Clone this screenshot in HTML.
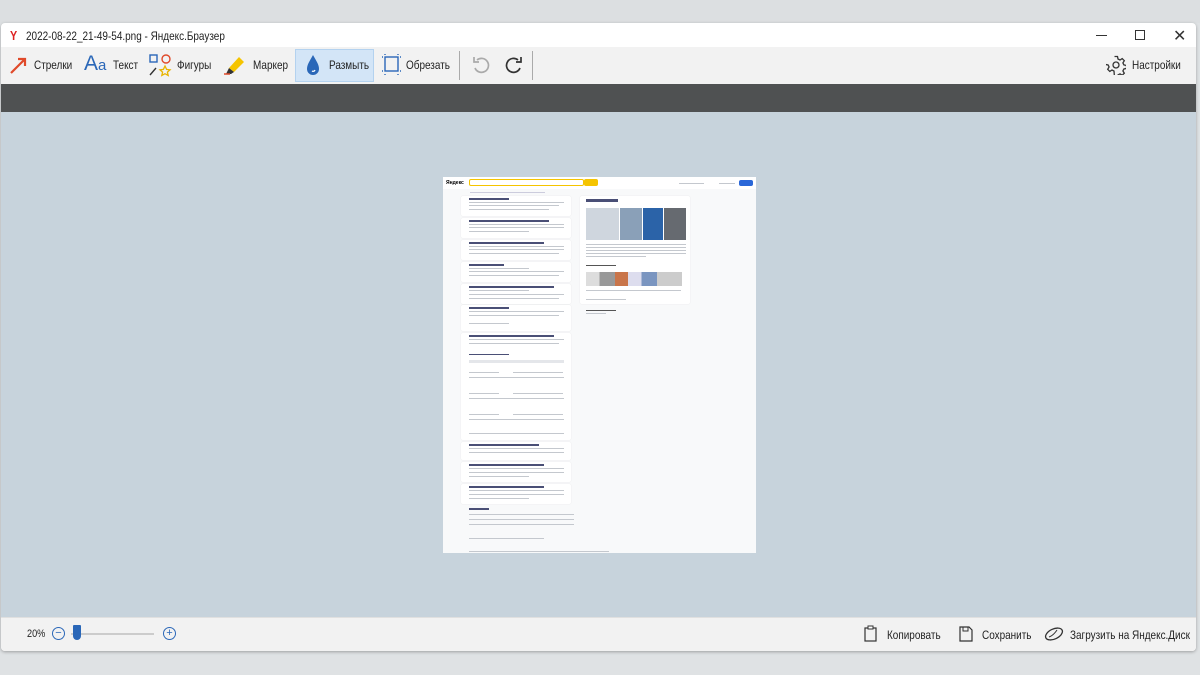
<!DOCTYPE html>
<html><head><meta charset="utf-8"><style>
*{margin:0;padding:0;box-sizing:border-box}
body{width:1200px;height:675px;overflow:hidden;background:#dfe2e4;font-family:"Liberation Sans",sans-serif;position:relative}
.a{position:absolute}
.t{font-size:12px;color:#222;white-space:nowrap;transform:scaleX(.83);transform-origin:0 0}
.l{position:absolute;height:1px;background:#c4c8ce}
.d{position:absolute;height:2px;background:#4a4f76}
.card{position:absolute;background:#fff;border-radius:2px;box-shadow:0 0 1px rgba(0,0,0,.12)}
</style></head><body>
<div class="a" style="left:0;top:0;width:1200px;height:23px;background:#dcdfe1"></div>
<div class="a" style="top:23px;left:1px;width:1195px;height:628px;background:#fff;border-radius:4px;box-shadow:0 1px 3px rgba(0,0,0,.3);overflow:hidden">
  <div class="a t" style="left:9px;top:5px;color:#d22;font-size:13px;font-weight:bold">Y</div>
  <div class="a t" style="left:25px;top:6px">2022-08-22_21-49-54.png - Яндекс.Браузер</div>
  <div class="a" style="left:1095px;top:12px;width:11px;height:1px;background:#333"></div>
  <div class="a" style="left:1134px;top:7px;width:10px;height:10px;border:1px solid #333"></div>
  <div class="a" style="left:1172px;top:3px;font-size:16px;color:#333">✕</div>
  <div class="a" style="left:0;top:24px;width:1195px;height:37px;background:#f2f2f2">
    <svg class="a" style="left:8px;top:8px" width="20" height="20"><path d="M2 18L16 4M9 4h7v7" stroke="#e04a2a" stroke-width="2.2" fill="none"/></svg>
    <div class="a t" style="left:33px;top:11px">Стрелки</div>
    <div class="a" style="left:83px;top:5px;font-size:21px;color:#2a67b8">A<span style="font-size:15px">a</span></div>
    <div class="a t" style="left:112px;top:11px">Текст</div>
    <svg class="a" style="left:147px;top:6px" width="24" height="24"><rect x="2" y="2" width="7" height="7" fill="none" stroke="#2a67b8" stroke-width="1.4"/><circle cx="18" cy="6" r="4" fill="none" stroke="#e04a2a" stroke-width="1.4"/><path d="M2 22L8 15" stroke="#333" stroke-width="1.4"/><path d="M17 13l1.6 3.4 3.4.4-2.6 2.3.8 3.4-3.2-1.8-3.2 1.8.8-3.4-2.6-2.3 3.4-.4z" fill="none" stroke="#e8b400" stroke-width="1.3"/></svg>
    <div class="a t" style="left:176px;top:11px">Фигуры</div>
    <svg class="a" style="left:222px;top:7px" width="24" height="22"><path d="M6 14L16 3l5 5-10 10z" fill="#f5c400"/><path d="M6 14l5 4-3 2H3z" fill="#333"/><path d="M1 20h6" stroke="#e04a2a" stroke-width="1.5"/></svg>
    <div class="a t" style="left:252px;top:11px">Маркер</div>
    <div class="a" style="left:294px;top:2px;width:79px;height:33px;background:#d3e5f7;border:1px solid #b4d2ef"></div>
    <svg class="a" style="left:303px;top:7px" width="18" height="22"><path d="M9 1C5 8 3 11 3 15a6 6 0 0 0 12 0C15 11 13 8 9 1z" fill="#2a67b8"/><path d="M8 17a2 2 0 0 0 3-1" stroke="#fff" stroke-width="1.2" fill="none"/></svg>
    <div class="a t" style="left:328px;top:11px">Размыть</div>
    <svg class="a" style="left:380px;top:6px" width="22" height="24"><rect x="4" y="4" width="13" height="14" fill="none" stroke="#2a67b8" stroke-width="1.4"/><path d="M1 4h1M1 18h1M19 4h1M19 18h1M4 1v1M17 1v1M4 21v1M17 21v1" stroke="#2a67b8" stroke-width="1.4"/></svg>
    <div class="a t" style="left:405px;top:11px">Обрезать</div>
    <div class="a" style="left:458px;top:4px;width:1px;height:29px;background:#aaa"></div>
    <svg class="a" style="left:470px;top:8px" width="20" height="20"><path d="M6 5A7 7 0 1 1 4 13" stroke="#aaa" stroke-width="1.7" fill="none"/><path d="M3 2v5h5" stroke="#aaa" stroke-width="1.7" fill="none"/></svg>
    <svg class="a" style="left:503px;top:8px" width="20" height="20"><path d="M14 5A7 7 0 1 0 16 13" stroke="#333" stroke-width="1.7" fill="none"/><path d="M17 2v5h-5" stroke="#333" stroke-width="1.7" fill="none"/></svg>
    <div class="a" style="left:531px;top:4px;width:1px;height:29px;background:#aaa"></div>
    <svg class="a" style="left:1105px;top:8px" width="20" height="20"><circle cx="10" cy="10" r="3" fill="none" stroke="#333" stroke-width="1.3"/><path d="M8.5 1.5h3l.5 2.5 2 1 2.2-1.4 2.1 2.1-1.4 2.2 1 2 2.6.6v3l-2.6.5-1 2 1.4 2.2-2.1 2.1-2.2-1.4-2 1-.5 2.6h-3L8 16l-2-1-2.2 1.4-2.1-2.1L3.1 12l-1-2-2.6-.5" fill="none" stroke="#333" stroke-width="1.3"/></svg>
    <div class="a t" style="left:1131px;top:11px">Настройки</div>
  </div>
  <div class="a" style="left:0;top:61px;width:1195px;height:28px;background:#4f5152"></div>
  <div class="a" style="left:0;top:89px;width:1195px;height:505px;background:#c7d3dc"></div>
  <div class="a" style="left:0;top:594px;width:1195px;height:34px;background:#f2f2f2;border-top:1px solid #e0e0e0">
    <div class="a t" style="left:26px;top:10px;font-size:11px">20%</div>
    <div class="a" style="left:51px;top:9px;width:13px;height:13px;border:1px solid #2a67b8;border-radius:50%;color:#2a67b8;font-size:11px;line-height:10px;text-align:center">−</div>
    <div class="a" style="left:70px;top:15px;width:83px;height:2px;background:#ccc"></div>
    <div class="a" style="left:72px;top:7px;width:8px;height:15px;background:#2a67b8;border-radius:1px 1px 4px 4px"></div>
    <div class="a" style="left:162px;top:9px;width:13px;height:13px;border:1px solid #2a67b8;border-radius:50%;color:#2a67b8;font-size:11px;line-height:11px;text-align:center">+</div>
    <svg class="a" style="left:862px;top:7px" width="16" height="18"><rect x="2" y="3" width="11" height="13" fill="none" stroke="#333" stroke-width="1.2"/><rect x="5" y="1" width="5" height="3" fill="#fff" stroke="#333"/></svg>
    <div class="a t" style="left:886px;top:10px">Копировать</div>
    <svg class="a" style="left:957px;top:7px" width="16" height="18"><path d="M2 2h9l3 3v11H2z" fill="none" stroke="#333" stroke-width="1.2"/><rect x="5" y="2" width="5" height="4" fill="none" stroke="#333"/></svg>
    <div class="a t" style="left:981px;top:10px">Сохранить</div>
    <svg class="a" style="left:1043px;top:7px" width="20" height="18"><ellipse cx="10" cy="9" rx="9" ry="5" transform="rotate(-25 10 9)" fill="none" stroke="#333" stroke-width="1.3"/><path d="M5 12c3-1 6-4 8-7" stroke="#333" fill="none"/></svg>
    <div class="a t" style="left:1069px;top:10px">Загрузить на Яндекс.Диск</div>
  </div>
  <div class="a" style="left:442px;top:154px;width:313px;height:376px;background:#f8f9fa;overflow:hidden">
    <div class="a" style="left:0;top:0;width:313px;height:12px;background:#fff"></div>
    <div class="a" style="left:3px;top:3px;font-size:5px;font-weight:bold">Яндекс</div>
    <div class="a" style="left:26px;top:2px;width:115px;height:7px;border:1px solid #f5c400;border-radius:2px;background:#fff"></div>
    <div class="a" style="left:141px;top:2px;width:14px;height:7px;background:#f5c400;border-radius:2px"></div>
    <div class="a" style="left:296px;top:3px;width:14px;height:6px;background:#2a67d8;border-radius:2px"></div>
    <div class="l" style="left:276px;top:6px;width:16px"></div>
    <div class="l" style="left:236px;top:6px;width:25px"></div>
    <div class="l" style="left:27px;top:15px;width:75px;background:#ccd"></div>
    <div class="card" style="left:18px;top:19px;width:110px;height:20px"></div>
    <div class="card" style="left:18px;top:41px;width:110px;height:20px"></div>
    <div class="card" style="left:18px;top:63px;width:110px;height:20px"></div>
    <div class="card" style="left:18px;top:85px;width:110px;height:20px"></div>
    <div class="card" style="left:18px;top:107px;width:110px;height:20px"></div>
    <div class="card" style="left:18px;top:128px;width:110px;height:26px"></div>
    <div class="card" style="left:18px;top:156px;width:110px;height:107px"></div>
    <div class="card" style="left:18px;top:265px;width:110px;height:18px"></div>
    <div class="card" style="left:18px;top:285px;width:110px;height:20px"></div>
    <div class="card" style="left:18px;top:307px;width:110px;height:20px"></div>
    <div class="d" style="left:26px;top:21px;width:40px"></div><div class="l" style="left:26px;top:25px;width:95px"></div><div class="l" style="left:26px;top:28px;width:90px"></div><div class="l" style="left:26px;top:32px;width:80px"></div>
    <div class="d" style="left:26px;top:43px;width:80px"></div><div class="l" style="left:26px;top:47px;width:95px"></div><div class="l" style="left:26px;top:50px;width:95px"></div><div class="l" style="left:26px;top:54px;width:60px"></div>
    <div class="d" style="left:26px;top:65px;width:75px"></div><div class="l" style="left:26px;top:69px;width:95px"></div><div class="l" style="left:26px;top:72px;width:95px"></div><div class="l" style="left:26px;top:76px;width:90px"></div>
    <div class="d" style="left:26px;top:87px;width:35px"></div><div class="l" style="left:26px;top:91px;width:60px"></div><div class="l" style="left:26px;top:94px;width:95px"></div><div class="l" style="left:26px;top:98px;width:90px"></div>
    <div class="d" style="left:26px;top:109px;width:85px"></div><div class="l" style="left:26px;top:113px;width:60px"></div><div class="l" style="left:26px;top:117px;width:95px"></div><div class="l" style="left:26px;top:121px;width:90px"></div>
    <div class="d" style="left:26px;top:130px;width:40px"></div><div class="l" style="left:26px;top:134px;width:95px"></div><div class="l" style="left:26px;top:138px;width:90px"></div><div class="l" style="left:26px;top:146px;width:40px"></div>
    <div class="d" style="left:26px;top:158px;width:85px"></div><div class="l" style="left:26px;top:162px;width:95px"></div><div class="l" style="left:26px;top:166px;width:90px"></div><div class="d" style="left:26px;top:177px;width:40px;height:1px"></div>
    <div class="l" style="left:26px;top:183px;width:95px;height:3px;background:#e4e6ea"></div>
    <div class="l" style="left:26px;top:195px;width:30px"></div><div class="l" style="left:70px;top:195px;width:50px"></div><div class="l" style="left:26px;top:200px;width:95px"></div>
    <div class="l" style="left:26px;top:216px;width:30px"></div><div class="l" style="left:70px;top:216px;width:50px"></div><div class="l" style="left:26px;top:221px;width:95px"></div>
    <div class="l" style="left:26px;top:237px;width:30px"></div><div class="l" style="left:70px;top:237px;width:50px"></div><div class="l" style="left:26px;top:242px;width:95px"></div><div class="l" style="left:26px;top:256px;width:95px"></div>
    <div class="d" style="left:26px;top:267px;width:70px"></div><div class="l" style="left:26px;top:271px;width:95px"></div><div class="l" style="left:26px;top:275px;width:95px"></div>
    <div class="d" style="left:26px;top:287px;width:75px"></div><div class="l" style="left:26px;top:291px;width:95px"></div><div class="l" style="left:26px;top:295px;width:95px"></div><div class="l" style="left:26px;top:299px;width:60px"></div>
    <div class="d" style="left:26px;top:309px;width:75px"></div><div class="l" style="left:26px;top:313px;width:95px"></div><div class="l" style="left:26px;top:317px;width:95px"></div><div class="l" style="left:26px;top:321px;width:60px"></div>
    <div class="d" style="left:26px;top:331px;width:20px"></div><div class="l" style="left:26px;top:337px;width:105px"></div><div class="l" style="left:26px;top:342px;width:105px"></div><div class="l" style="left:26px;top:347px;width:105px"></div>
    <div class="l" style="left:26px;top:361px;width:75px"></div><div class="l" style="left:26px;top:374px;width:140px"></div>
    <div class="card" style="left:137px;top:19px;width:110px;height:108px"></div>
    <div class="d" style="left:143px;top:22px;width:32px;height:3px"></div>
    <div class="a" style="left:143px;top:31px;width:33px;height:32px;background:#cfd6de"></div>
    <div class="a" style="left:177px;top:31px;width:22px;height:32px;background:#8aa0b8"></div>
    <div class="a" style="left:200px;top:31px;width:20px;height:32px;background:#2b63a8"></div>
    <div class="a" style="left:221px;top:31px;width:22px;height:32px;background:#666a70"></div>
    <div class="l" style="left:143px;top:67px;width:100px"></div><div class="l" style="left:143px;top:70px;width:100px"></div><div class="l" style="left:143px;top:73px;width:100px"></div><div class="l" style="left:143px;top:76px;width:100px"></div><div class="l" style="left:143px;top:79px;width:60px"></div>
    <div class="l" style="left:143px;top:88px;width:30px;background:#555"></div>
    <div class="a" style="left:143px;top:95px;width:96px;height:14px;background:linear-gradient(90deg,#ddd 0 14%,#999 14% 30%,#c9754a 30% 44%,#dde 44% 58%,#7a95c0 58% 74%,#ccc 74%)"></div>
    <div class="l" style="left:143px;top:113px;width:95px"></div>
    <div class="l" style="left:143px;top:122px;width:40px"></div>
    <div class="l" style="left:143px;top:133px;width:30px;background:#555"></div>
    <div class="l" style="left:143px;top:136px;width:20px"></div>
  </div>
</div>
</body></html>
